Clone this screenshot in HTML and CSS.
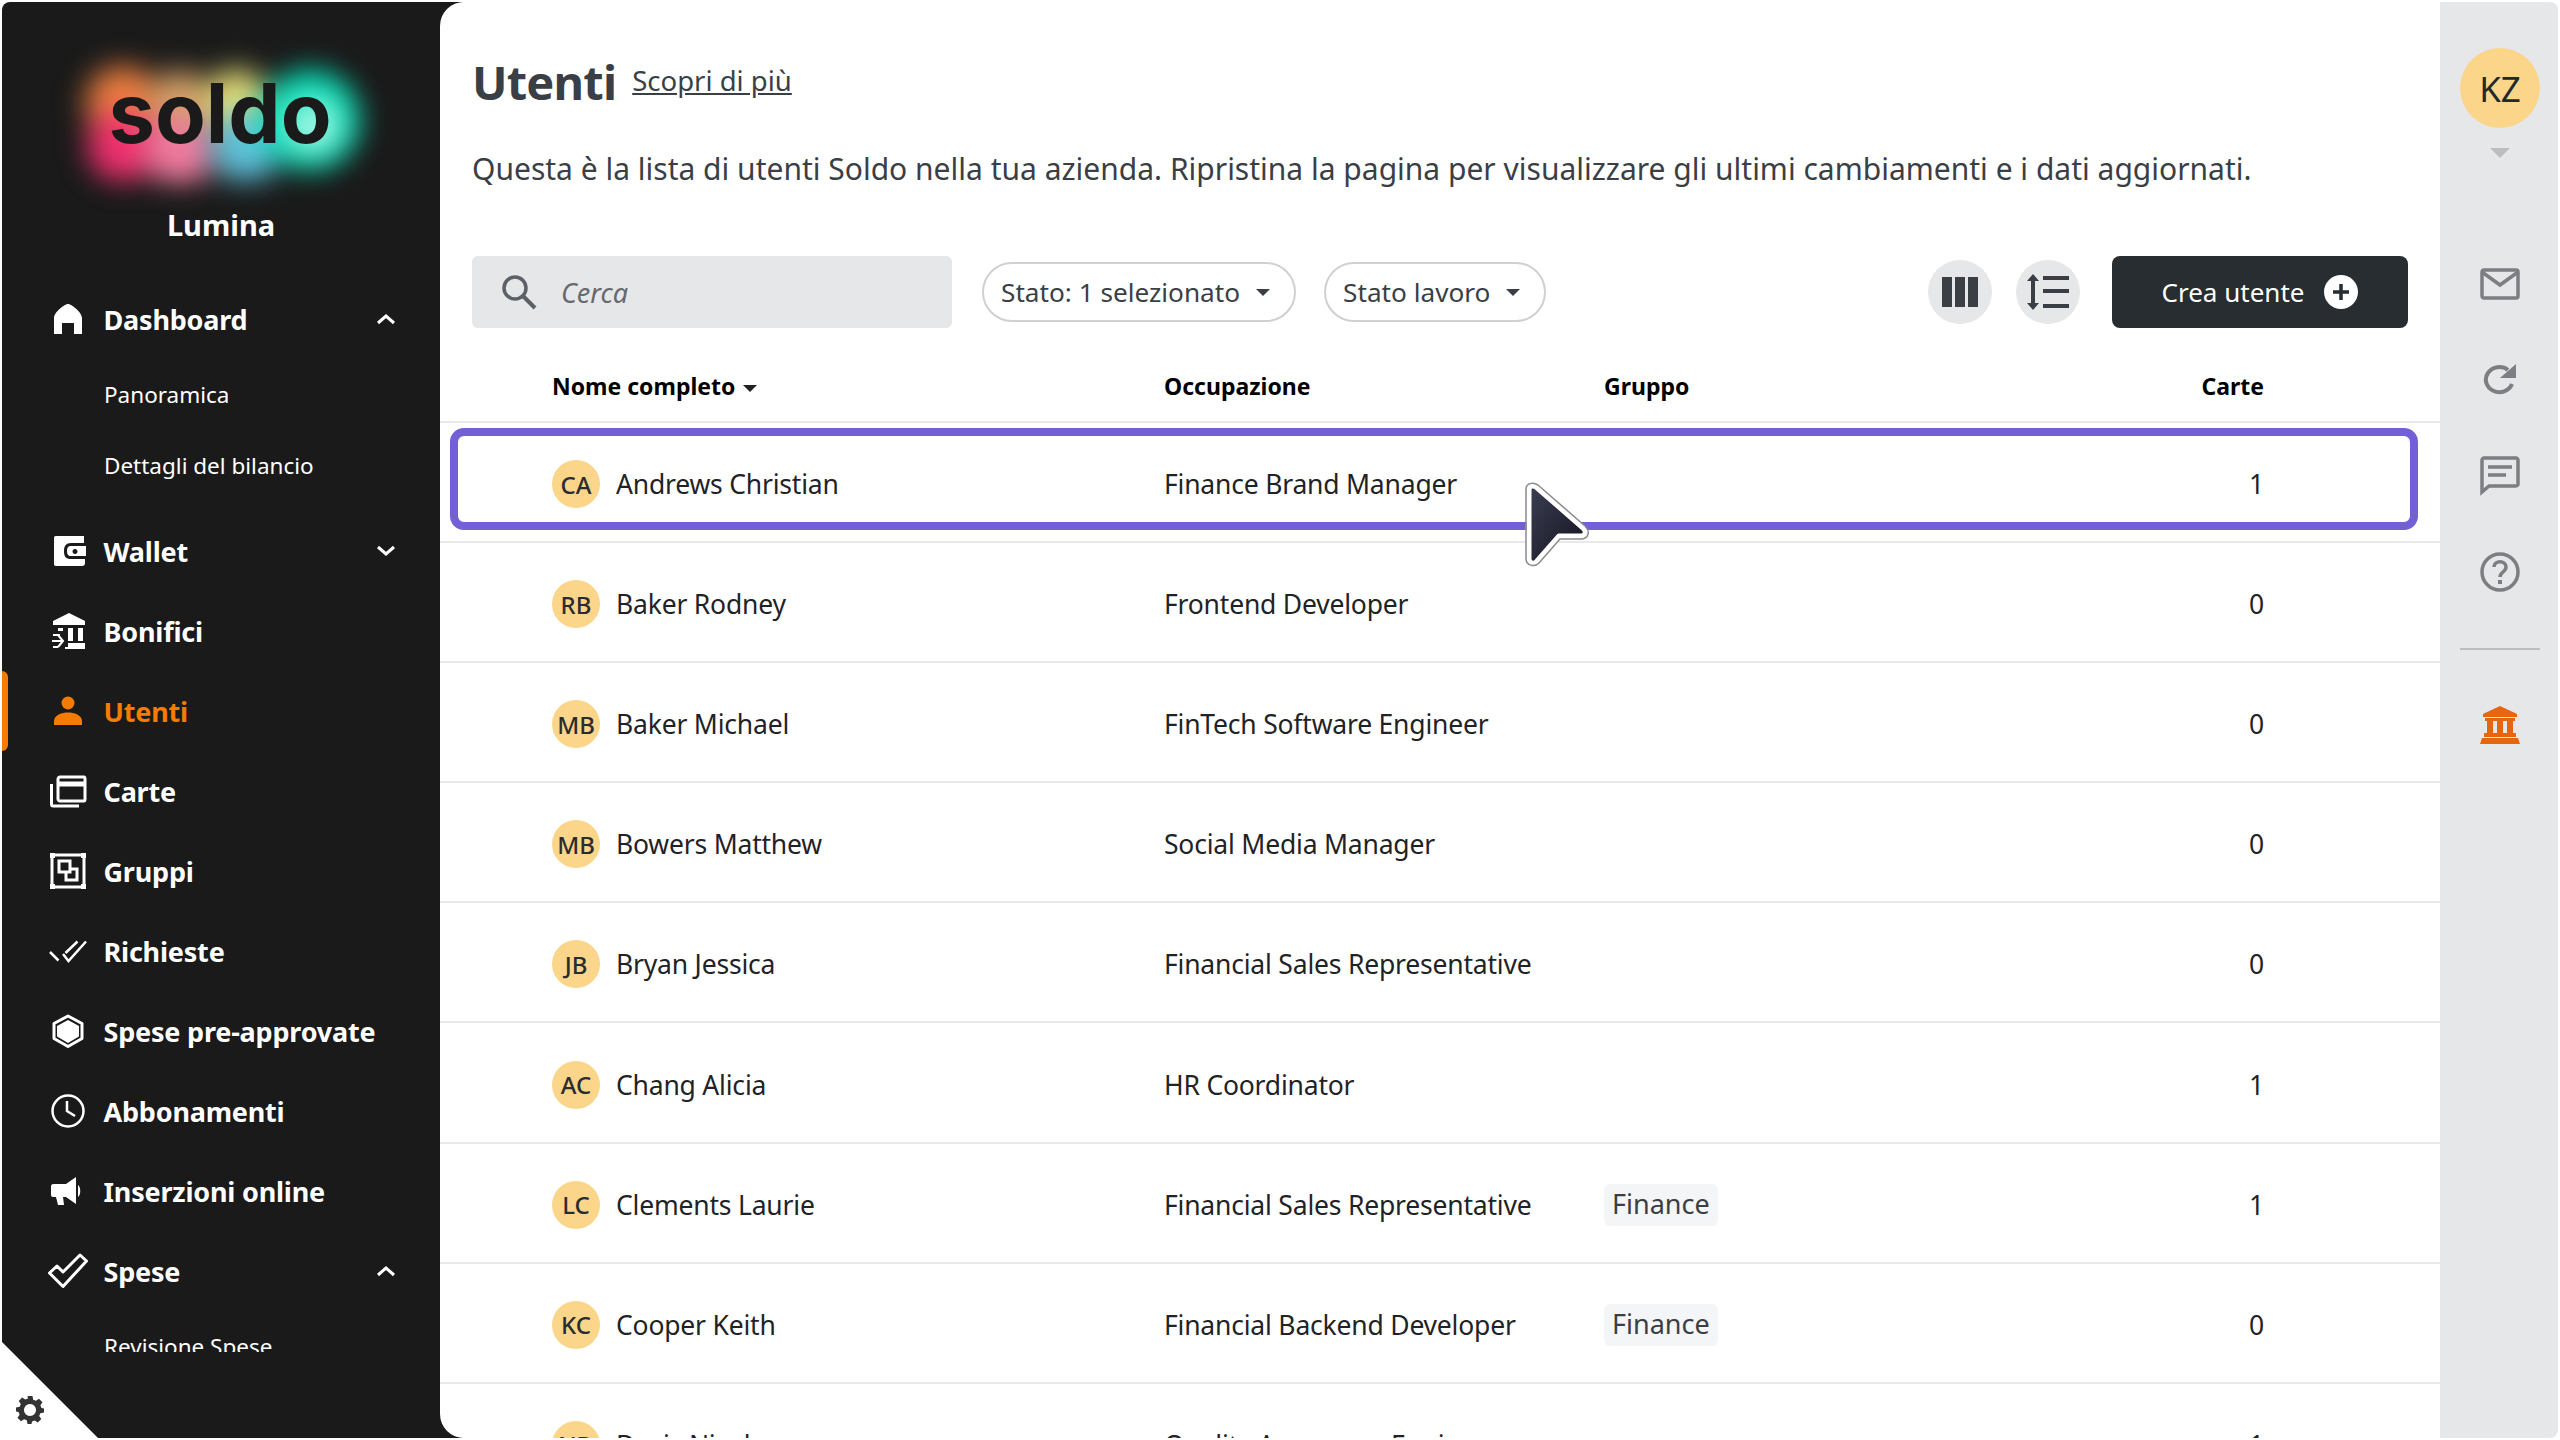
FILE: index.html
```html
<!DOCTYPE html>
<html lang="it">
<head>
    <meta charset="UTF-8">
    <title>Utenti - Soldo</title>
    <link rel="stylesheet" href="styles.css">
</head>
<body>
    <div class="app">
        <aside class="sidebar">
            <div class="brand">
                <div class="logo">
                    <div class="glow"></div>
                    <span class="logo-text">soldo</span>
                </div>
                <div class="company">Lumina</div>
            </div>
            <nav class="nav">
                <a class="nav-item">
                    <svg class="nav-icon" viewBox="0 0 40 40"><path fill="#fff" d="M20 5 C23 5 34 13 34 19 V35 H26 V24 H14 V35 H6 V19 C6 13 17 5 20 5Z"/></svg>
                    <span class="nav-label">Dashboard</span>
                    <svg class="chevron" viewBox="0 0 20 12"><path d="M2 10 L10 3 L18 10" /></svg>
                </a>
                <div class="subnav">
                    <a class="sub-item">Panoramica</a>
                    <a class="sub-item">Dettagli del bilancio</a>
                </div>
                <a class="nav-item">
                    <svg class="nav-icon" viewBox="0 0 40 40"><path fill="#fff" fill-rule="evenodd" d="M8 5 H36 V12 H23 C18 12 16 15 16 20 C16 26 18 28 23 28 H37 V32 C37 34 36 35 34 35 H8 C6 35 6 34 6 32 V8 C6 6 6 5 8 5Z M23 15 H38 V25 H23 C20 25 19 23 19 20 C19 17 20 15 23 15Z M27 18 a2.500 2.500 0 1 0 .01 0Z"/></svg>
                    <span class="nav-label">Wallet</span>
                    <svg class="chevron" viewBox="0 0 20 12"><path d="M2 2 L10 9 L18 2" /></svg>
                </a>
                <a class="nav-item">
                    <svg class="nav-icon" viewBox="0 0 40 40"><path fill="#fff" d="M21 2 L37 10 V14 H5 V10Z M20 17 H25 V30 H20Z M30 17 H35 V30 H30Z M10 17 H15 V20 H10Z M20 32 H37 V38 H17 V36 H20Z"/><path fill="none" stroke="#fff" stroke-width="2" d="M4 30 H15 M10 24 L15 30 L10 36 M5 24 H12 M5 36 H10"/></svg>
                    <span class="nav-label">Bonifici</span>
                </a>
                <a class="nav-item active">
                    <svg class="nav-icon" viewBox="0 0 40 40"><circle cx="20" cy="12" r="6.500" fill="#f57c00"/><path fill="#f57c00" d="M6 34 V30 C6 24 14 21.500 20 21.500 C26 21.500 34 24 34 30 V34Z"/></svg>
                    <span class="nav-label">Utenti</span>
                </a>
                <a class="nav-item">
                    <svg class="nav-icon" viewBox="0 0 40 40"><path fill="none" stroke="#fff" stroke-width="3" d="M10 8 C10 7 11 6 12 6 H36 C37 6 37 7 37 8 V28 C37 29 37 30 36 30 H12 C11 30 10 29 10 28Z M10 14 H37 M3.500 13 V33 C3.500 34 4 35 5 35 H31"/><path stroke="#fff" stroke-width="3" d="M10 12 H37"/></svg>
                    <span class="nav-label">Carte</span>
                </a>
                <a class="nav-item">
                    <svg class="nav-icon" viewBox="0 0 40 40"><path fill="none" stroke="#fff" stroke-width="3" d="M4 4 H36 V36 H4Z M11 10 H22 V21 H11Z M18 21 V29 H29 V18 H22"/><path fill="#fff" d="M2 2 H7 V7 H2Z M33 2 H38 V7 H33Z M2 33 H7 V38 H2Z M33 33 H38 V38 H33Z"/></svg>
                    <span class="nav-label">Gruppi</span>
                </a>
                <a class="nav-item">
                    <svg class="nav-icon" viewBox="0 0 40 40"><path fill="none" stroke="#fff" stroke-width="2.500" d="M2 21 L10.500 29.500 M15 23 L20.500 30 L38 10.500 M17.500 22 L29.500 10.500"/></svg>
                    <span class="nav-label">Richieste</span>
                </a>
                <a class="nav-item">
                    <svg class="nav-icon" viewBox="0 0 40 40"><path fill="none" stroke="#fff" stroke-width="3" stroke-linejoin="round" d="M20 5 L34 12.500 V27.500 L20 35.500 L6 27.500 V12.500Z"/><path fill="#fff" d="M20 9 L31 15 V25.500 L20 32 L9 25.500 V15Z"/></svg>
                    <span class="nav-label">Spese pre-approvate</span>
                </a>
                <a class="nav-item">
                    <svg class="nav-icon" viewBox="0 0 40 40"><circle cx="20" cy="20" r="15.500" fill="none" stroke="#fff" stroke-width="2.500"/><path fill="none" stroke="#fff" stroke-width="2.500" d="M19 10 V20 L27 25"/></svg>
                    <span class="nav-label">Abbonamenti</span>
                </a>
                <a class="nav-item">
                    <svg class="nav-icon" viewBox="0 0 40 40"><path fill="#fff" d="M5 13 C4 13 3 14 3 15 V24 C3 25 4 26 5 26 H8 L10 34 H16 L15 26 H18 L28 33 V6 L18 13Z M30 14 C33 16 33 24 30 26Z"/></svg>
                    <span class="nav-label">Inserzioni online</span>
                </a>
                <a class="nav-item">
                    <svg class="nav-icon" viewBox="0 0 40 40"><path fill="none" stroke="#fff" stroke-width="3" stroke-linejoin="round" d="M1.500 22 L9 15 L15 21 L32 4 L38.500 10 L15 35.500Z"/></svg>
                    <span class="nav-label">Spese</span>
                    <svg class="chevron" viewBox="0 0 20 12"><path d="M2 10 L10 3 L18 10" /></svg>
                </a>
                <div class="subnav">
                    <a class="sub-item">Revisione Spese</a>
                </div>
            </nav>
            <div class="settings-corner">
                <svg class="gear" viewBox="0 0 28 28"><path fill="#333" fill-rule="evenodd" d="M11.500 0 H16.500 L17.200 3.700 L19.900 4.800 L23 2.700 L26.500 6.200 L24.400 9.300 L25.500 12 L28 12.500 V16.500 L24.300 17.200 L23.200 19.900 L25.300 23 L21.800 26.500 L18.700 24.400 L16 25.500 L15.500 28 H11.500 L10.800 24.300 L8.100 23.200 L5 25.300 L1.500 21.800 L3.600 18.700 L2.500 16 L0 15.500 V11.500 L3.700 10.800 L4.800 8.100 L2.700 5 L6.200 1.500 L9.300 3.600 L12 2.500Z M14 8 a6 6 0 1 0 .01 0Z"/></svg>
            </div>
        </aside>

        <main class="content">
            <header class="page-head">
                <h1>Utenti</h1>
                <a class="learn-more">Scopri di più</a>
            </header>
            <p class="intro">Questa è la lista di utenti Soldo nella tua azienda. Ripristina la pagina per visualizzare gli ultimi cambiamenti e i dati aggiornati.</p>

            <div class="toolbar">
                <div class="search">
                    <svg class="search-icon" viewBox="0 0 36 36"><circle cx="14" cy="14" r="11" fill="none" stroke="#5c6168" stroke-width="3.500"/><path d="M22 22 L34 34" stroke="#5c6168" stroke-width="4"/></svg>
                    <span>Cerca</span>
                </div>
                <button class="pill">Stato: 1 selezionato <i class="caret"></i></button>
                <button class="pill">Stato lavoro <i class="caret"></i></button>
                <div class="spacer"></div>
                <button class="round-btn">
                    <svg viewBox="0 0 36 32" width="36" height="32"><path fill="#3a3f46" d="M0 1 H10 V31 H0Z M13 1 H23 V31 H13Z M26 1 H36 V31 H26Z"/></svg>
                </button>
                <button class="round-btn">
                    <svg viewBox="0 0 42 36" width="42" height="36"><path fill="#3a3f46" d="M6 0 L12 7 H8 V29 H12 L6 36 L0 29 H4 V7 H0Z M16 2 H42 V6 H16Z M16 15 H42 V19 H16Z M16 30 H42 V34 H16Z"/></svg>
                </button>
                <button class="create-btn">
                    <span>Crea utente</span>
                    <svg viewBox="0 0 34 34" width="34" height="34"><circle cx="17" cy="17" r="17" fill="#fff"/><path d="M17 9 V25 M9 17 H25" stroke="#272d30" stroke-width="3.500"/></svg>
                </button>
            </div>

            <div class="table">
                <div class="row head">
                    <div>Nome completo <i class="caret dark"></i></div>
                    <div>Occupazione</div>
                    <div>Gruppo</div>
                    <div class="num">Carte</div>
                </div>
                <div class="row">
                    <div class="name"><span class="avatar">CA</span>Andrews Christian</div>
                    <div>Finance Brand Manager</div>
                    <div></div>
                    <div class="num">1</div>
                </div>
                <div class="row">
                    <div class="name"><span class="avatar">RB</span>Baker Rodney</div>
                    <div>Frontend Developer</div>
                    <div></div>
                    <div class="num">0</div>
                </div>
                <div class="row">
                    <div class="name"><span class="avatar">MB</span>Baker Michael</div>
                    <div>FinTech Software Engineer</div>
                    <div></div>
                    <div class="num">0</div>
                </div>
                <div class="row">
                    <div class="name"><span class="avatar">MB</span>Bowers Matthew</div>
                    <div>Social Media Manager</div>
                    <div></div>
                    <div class="num">0</div>
                </div>
                <div class="row">
                    <div class="name"><span class="avatar">JB</span>Bryan Jessica</div>
                    <div>Financial Sales Representative</div>
                    <div></div>
                    <div class="num">0</div>
                </div>
                <div class="row">
                    <div class="name"><span class="avatar">AC</span>Chang Alicia</div>
                    <div>HR Coordinator</div>
                    <div></div>
                    <div class="num">1</div>
                </div>
                <div class="row">
                    <div class="name"><span class="avatar">LC</span>Clements Laurie</div>
                    <div>Financial Sales Representative</div>
                    <div><span class="chip">Finance</span></div>
                    <div class="num">1</div>
                </div>
                <div class="row">
                    <div class="name"><span class="avatar">KC</span>Cooper Keith</div>
                    <div>Financial Backend Developer</div>
                    <div><span class="chip">Finance</span></div>
                    <div class="num">0</div>
                </div>
                <div class="row">
                    <div class="name"><span class="avatar">ND</span>Davis Nicole</div>
                    <div>Quality Assurance Engineer</div>
                    <div></div>
                    <div class="num">1</div>
                </div>
            </div>

            <div class="highlight"></div>
            <svg class="cursor" viewBox="0 0 70 90" width="70" height="90">
                <defs>
                    <linearGradient id="cursorFill" x1="0" y1="0" x2="1" y2="1">
                        <stop offset="0" stop-color="#3b3f52"/>
                        <stop offset="1" stop-color="#12121f"/>
                    </linearGradient>
                </defs>
                <path d="M6 9 C6 5 10 4 13 6 L60 47 C64 51 62 55 58 55 H36 L14 80 C11 84 6 82 6 78Z" fill="url(#cursorFill)" stroke="#fff" stroke-width="5" stroke-linejoin="round"/>
                <path d="M3 8 C3 2 10 1 15 4 L62 45 C68 51 65 58 58 58 H37 L16 82 C11 87 3 84 3 78Z" fill="none" stroke="#8a8a90" stroke-width="1.500"/>
            </svg>
        </main>

        <aside class="rail">
            <div class="user-avatar">KZ</div>
            <i class="rail-caret"></i>
            <div class="rail-icons">
                <div class="rail-slot"><svg viewBox="0 0 40 32" width="40" height="32"><rect x="2" y="2" width="36" height="28" rx="2" fill="none" stroke="#7b7e83" stroke-width="3.500"/><path d="M2 4 L20 17 L38 4" fill="none" stroke="#7b7e83" stroke-width="3.500"/></svg></div>
                <div class="rail-slot"><svg viewBox="0 0 34 34" width="34" height="34"><path d="M29 21 A13.500 12.500 0 1 1 25 7" fill="none" stroke="#7b7e83" stroke-width="4"/><path d="M33 1 V15 H17Z" fill="#7b7e83"/></svg></div>
                <div class="rail-slot"><svg viewBox="0 0 40 40" width="40" height="40"><path d="M2 36 V4 C2 3 3 2 4 2 H36 C37 2 38 3 38 4 V28 C38 29 37 30 36 30 H9Z" fill="none" stroke="#7b7e83" stroke-width="3.500"/><path d="M8 11 H32 M8 19 H26" stroke="#7b7e83" stroke-width="3.500"/></svg></div>
                <div class="rail-slot"><svg viewBox="0 0 40 40" width="40" height="40"><circle cx="20" cy="20" r="18" fill="none" stroke="#7b7e83" stroke-width="3.500"/><path d="M14 15 C14 8 26 8 26 15 C26 20 20 20 20 25" fill="none" stroke="#7b7e83" stroke-width="3.500"/><rect x="18" y="28" width="4" height="4" fill="#7b7e83"/></svg></div>
            </div>
            <div class="rail-divider"></div>
            <svg class="bank" viewBox="0 0 40 38" width="40" height="38"><path fill="#e8650f" d="M20 0 L37 8 V11 H3 V8Z M5 12 H35 V15 H5Z M7 15 H13 V27 H7Z M17 15 H23 V27 H17Z M27 15 H33 V27 H27Z M4 27 H36 V31 H4Z M2 32 H38 L40 38 H0Z"/></svg>
        </aside>
    </div>
</body>
</html>
```

FILE: styles.css
```css
* {
    box-sizing: border-box;
}
html, body {
    margin: 0;
    height: 100%;
    background: #fff;
    overflow: hidden;
}
body {
    font-family: "Noto Sans", "Open Sans", sans-serif;
    color: #1f2326;
}
a {
    color: inherit;
}
.app {
    display: flex;
    width: 2560px;
    height: 1440px;
    padding: 2px;
}

/* left nav */
.sidebar {
    width: 460px;
    margin-right: -22px;
    flex: none;
    position: relative;
    background: #1a1a1a;
    border-radius: 8px 0 0 0;
    color: #fff;
    overflow: hidden;
}
.brand {
    height: 277px;
    width: 438px;
    text-align: center;
    padding-top: 48px;
}
.logo {
    position: relative;
    width: 300px;
    height: 130px;
    margin: 0 auto;
    left: -3px;
}
.glow {
    position: absolute;
    inset: 8px 0 -8px 0;
    filter: blur(12px);
    background:
        radial-gradient(circle 40px at 245px 68px, #d8fff4, transparent),
        radial-gradient(circle 62px at 242px 62px, #06e0b8 60%, transparent),
        radial-gradient(circle 50px at 178px 88px, #5fc4dc 40%, transparent),
        radial-gradient(circle 46px at 168px 45px, #e8e078 40%, transparent),
        radial-gradient(circle 50px at 112px 92px, #f27ca0 40%, transparent),
        radial-gradient(circle 44px at 112px 45px, #d8a468 40%, transparent),
        radial-gradient(circle 48px at 55px 88px, #f0306e 45%, transparent),
        radial-gradient(circle 50px at 55px 45px, #ef8040 45%, transparent);
}
.logo-text {
    position: absolute;
    left: 40px;
    top: 2px;
    width: 224px;
    font-family: "Inter", sans-serif;
    font-weight: 700;
    font-size: 83px;
    line-height: 122px;
    color: #1a1a1a;
    text-align: center;
}
.company {
    margin-top: 25px;
    font-size: 29px;
    font-weight: 700;
    line-height: 40px;
}
.nav {
    width: 438px;
    height: 1073px;
    overflow: hidden;
}
.nav-item {
    display: flex;
    align-items: center;
    height: 80px;
    padding-left: 46px;
    position: relative;
    font-size: 27px;
    font-weight: 700;
    letter-spacing: -0.2px;
}
.nav-icon {
    width: 40px;
    height: 40px;
    flex: none;
    margin-right: 15.5px;
}
.nav-label {
    flex: 1;
}
.chevron {
    width: 20px;
    height: 12px;
    margin-right: 44px;
    fill: none;
    stroke: #fff;
    stroke-width: 3;
}
.nav-item.active {
    color: #f57c00;
}
.nav-item.active::before {
    content: "";
    position: absolute;
    left: 0;
    top: 0;
    width: 6px;
    height: 80px;
    background: #f57c00;
    border-radius: 0 6px 6px 0;
}
.subnav {
    padding-bottom: 10px;
}
.sub-item {
    display: block;
    height: 71px;
    line-height: 71px;
    padding-left: 102px;
    font-size: 22.5px;
}
.settings-corner {
    position: absolute;
    left: 0;
    bottom: 0;
    width: 96px;
    height: 96px;
    background: #fff;
    clip-path: polygon(0 0, 100% 100%, 0 100%);
}
.gear {
    position: absolute;
    left: 14px;
    bottom: 14px;
    width: 28px;
    height: 28px;
}

/* main panel */
.content {
    flex: 1;
    position: relative;
    background: #fff;
    border-radius: 24px 0 0 24px;
    padding-top: 50px;
    overflow: hidden;
}
.page-head {
    display: flex;
    align-items: baseline;
    padding-left: 32px;
    height: 60px;
}
h1 {
    margin: 0 16px 0 0;
    font-size: 47px;
    font-weight: 700;
    line-height: 60px;
    letter-spacing: -0.8px;
    color: #3a3f46;
}
.learn-more {
    font-size: 27.5px;
    text-decoration: underline;
    color: #3a3f46;
    position: relative;
    top: -9px;
}
.intro {
    margin: 35px 0 0 32px;
    font-size: 30px;
    line-height: 44px;
    color: #3a3f46;
}
.toolbar {
    display: flex;
    align-items: center;
    margin-top: 65px;
    padding: 0 32px;
    height: 72px;
}
.search {
    display: flex;
    align-items: center;
    width: 480px;
    height: 72px;
    padding-left: 29px;
    background: #e6e7e9;
    border-radius: 6px;
    font-style: italic;
    font-size: 27px;
    color: #66696e;
    margin-right: 30px;
}
.search-icon {
    width: 36px;
    height: 36px;
    margin-right: 24px;
}
.pill {
    display: flex;
    align-items: center;
    height: 60px;
    padding: 0 24px 0 17px;
    margin-right: 28px;
    background: #fff;
    border: 2px solid #cfd0d2;
    border-radius: 30px;
    font: inherit;
    font-size: 26.2px;
    color: #3a3f46;
}
.caret {
    display: inline-block;
    width: 0;
    height: 0;
    margin-left: 16px;
    border-left: 7px solid transparent;
    border-right: 7px solid transparent;
    border-top: 7px solid #3a3f46;
}
.caret.dark {
    margin-left: 2px;
    vertical-align: 3px;
    border-top-color: #1f2326;
}
.spacer {
    flex: 1;
}
.round-btn {
    display: flex;
    align-items: center;
    justify-content: center;
    width: 64px;
    height: 64px;
    margin-right: 24px;
    padding: 0;
    border: 0;
    border-radius: 50%;
    background: #e6e7e9;
}
.round-btn + .create-btn {
    margin-left: 8px;
}
.create-btn {
    display: flex;
    align-items: center;
    justify-content: center;
    gap: 20px;
    width: 296px;
    height: 72px;
    border: 0;
    border-radius: 8px;
    background: #272d30;
    color: #fff;
    font: inherit;
    font-size: 26px;
}

/* table */
.table {
    margin-top: 29px;
}
.row {
    display: grid;
    grid-template-columns: 612px 440px 1fr 100px;
    align-items: center;
    height: 120.1px;
    padding: 4px 176px 0 112px;
    border-bottom: 2px solid #e8e9ea;
    font-size: 26.5px;
    letter-spacing: -0.2px;
    color: #1f2326;
}
.row.head {
    height: 66px;
    padding: 0 176px 6px 112px;
    font-size: 23px;
    letter-spacing: 0;
    font-weight: 700;
    color: #000;
}
.num {
    text-align: right;
}
.name {
    display: flex;
    align-items: center;
}
.avatar {
    display: flex;
    align-items: center;
    justify-content: center;
    width: 48px;
    height: 48px;
    margin-right: 16px;
    border-radius: 50%;
    background: #fbd68a;
    font-size: 24px;
    font-weight: 500;
    letter-spacing: 0;
    color: #2a2d30;
}
.chip {
    display: inline-block;
    padding: 0 8px;
    height: 42px;
    line-height: 40px;
    background: #f4f5f6;
    border-radius: 6px;
    font-size: 27px;
    letter-spacing: 0;
    color: #3a3f46;
}
.highlight {
    position: absolute;
    left: 10px;
    top: 426px;
    width: 1968px;
    height: 102px;
    border: 8px solid #735fd6;
    border-radius: 14px;
}
.cursor {
    position: absolute;
    left: 1083px;
    top: 479px;
}

/* right rail */
.rail {
    width: 118px;
    flex: none;
    display: flex;
    flex-direction: column;
    align-items: center;
    position: relative;
    z-index: 1;
    background: #e6e7e9;
    border-radius: 0 8px 8px 0;
    padding: 46px 0 0 2px;
}
.user-avatar {
    display: flex;
    align-items: center;
    justify-content: center;
    width: 80px;
    height: 80px;
    border-radius: 50%;
    background: #fbd68a;
    font-size: 35px;
    color: #23282b;
}
.rail-caret {
    width: 0;
    height: 0;
    margin-top: 20px;
    border-left: 10px solid transparent;
    border-right: 10px solid transparent;
    border-top: 10px solid #bcbdc0;
}
.rail-icons {
    margin-top: 78px;
}
.rail-slot {
    display: flex;
    align-items: center;
    justify-content: center;
    height: 96px;
}
.rail-divider {
    width: 80px;
    height: 2px;
    flex: none;
    margin-top: 28px;
    background: #bcbdc0;
}
.bank {
    margin-top: 56px;
}
```
